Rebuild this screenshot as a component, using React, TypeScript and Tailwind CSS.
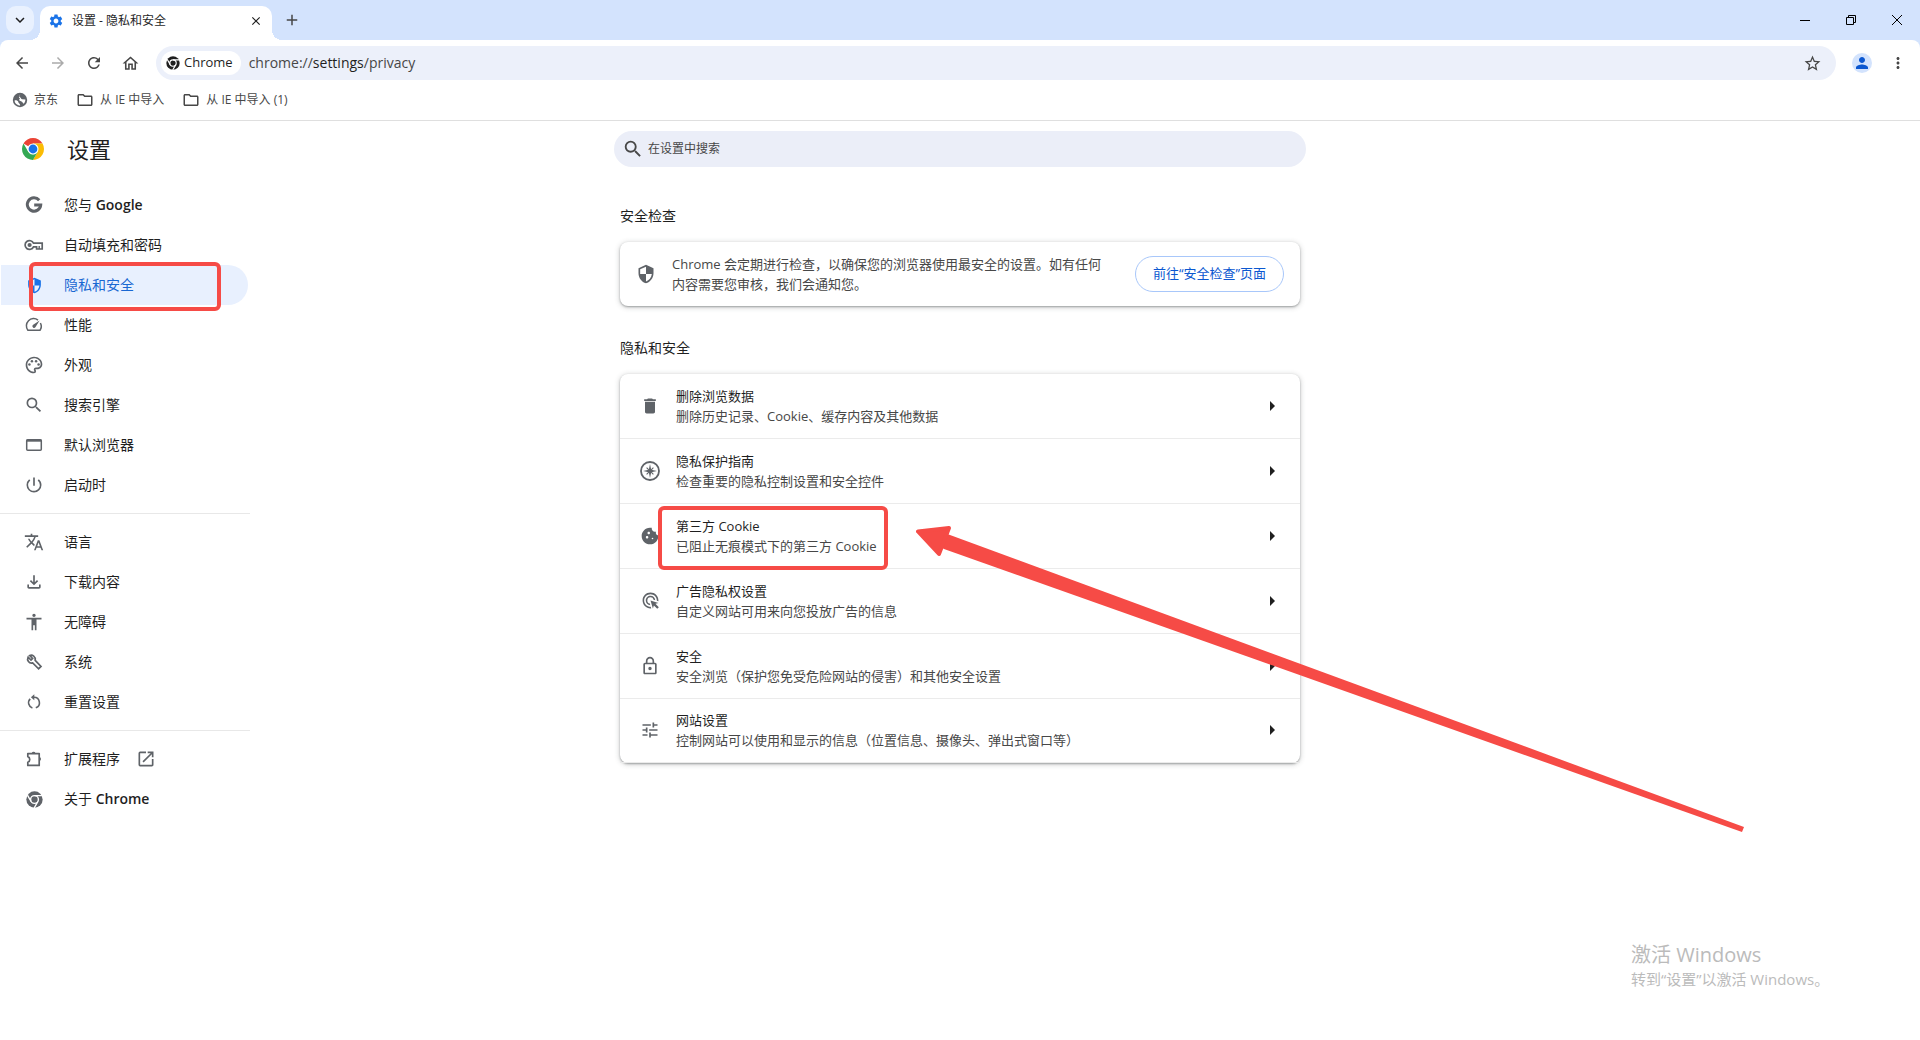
import type { ReactNode } from 'react';
import {
  MdAccessibility,
  MdAdd,
  MdAdsClick,
  MdArrowBack,
  MdArrowForward,
  MdArrowRight,
  MdClose,
  MdCookie,
  MdDelete,
  MdKeyboardArrowDown,
  MdMoreVert,
  MdOpenInNew,
  MdOutlineFileDownload,
  MdOutlineFolder,
  MdOutlineHome,
  MdOutlineLock,
  MdOutlinePalette,
  MdPerson,
  MdPowerSettingsNew,
  MdRefresh,
  MdSearch,
  MdSecurity,
  MdSettings,
  MdStarBorder,
  MdTranslate,
  MdTune,
} from 'react-icons/md';

type IconProps = { size?: number };

function GoogleIcon({ size = 20 }: IconProps) {
  return (
    <svg width={size} height={size} viewBox="0 0 20 20" fill="none" stroke="currentColor" strokeWidth="3">
      <path d="M15.2 5.2A6.7 6.7 0 1 0 16.7 10.1H10.2" />
    </svg>
  );
}

function KeyIcon({ size = 20 }: IconProps) {
  return (
    <svg width={size} height={size} viewBox="0 0 20 20" fill="none" stroke="currentColor" strokeWidth="1.7">
      <path d="M9.5 8.2A4.4 4.4 0 1 0 9.5 11.8H12.6V14H18.2V8.2Z" />
      <circle cx="5.6" cy="10" r="2.1" fill="currentColor" stroke="none" />
      <path d="M15.2 11V14" strokeWidth="1.4" />
    </svg>
  );
}

function SpeedIcon({ size = 20 }: IconProps) {
  return (
    <svg width={size} height={size} viewBox="0 0 20 20" fill="none" stroke="currentColor" strokeWidth="1.5">
      <path d="M14 5.1A7.2 7.2 0 0 0 3.9 15.2H16.1A7.2 7.2 0 0 0 16.4 8" />
      <path d="M15.6 5.4 11.4 12.2A1.7 1.7 0 1 1 8.8 10Z" fill="currentColor" stroke="none" />
    </svg>
  );
}

function WindowIcon({ size = 20 }: IconProps) {
  return (
    <svg width={size} height={size} viewBox="0 0 20 20" fill="none" stroke="currentColor" strokeWidth="1.5">
      <rect x="2.7" y="4.7" width="14.6" height="10.6" rx="1" />
      <path d="M2.5 5.6H17.5" strokeWidth="2.2" />
    </svg>
  );
}

function WrenchIcon({ size = 20 }: IconProps) {
  return (
    <svg width={size} height={size} viewBox="0 0 20 20" fill="none" stroke="currentColor" strokeWidth="1.7">
      <path d="M4.1 5.1 7 8 8.6 6.4 5.7 3.5C8.4 2.4 11.9 4.6 11.2 8.4L17 14.4 14.6 16.8 8.7 10.9C5 11.8 2.6 8.3 4.1 5.1Z" />
    </svg>
  );
}

function ResetIcon({ size = 20 }: IconProps) {
  return (
    <svg width={size} height={size} viewBox="0 0 20 20" fill="none" stroke="currentColor" strokeWidth="1.6">
      <path d="M10 5.3A5.4 5.4 0 0 1 11.8 15.8M8.4 15.9A5.4 5.4 0 0 1 6.2 6.9" />
      <path d="M10.3 2.2V8.2L6.9 5.2Z" fill="currentColor" stroke="none" />
    </svg>
  );
}

function PuzzleIcon({ size = 20 }: IconProps) {
  return (
    <svg width={size} height={size} viewBox="0 0 20 20">
      <path
        d="M3.8 4.6H15.2V16.4H3.8V13.2C6.4 12.4 6.4 8.4 3.8 7.6Z"
        fill="none"
        stroke="currentColor"
        strokeWidth="1.7"
        strokeLinejoin="round"
      />
      <path d="M7.7 4.2A2 2 0 0 1 11.5 4.2ZM15.6 8.1A2 2 0 0 1 15.6 11.9Z" fill="currentColor" />
    </svg>
  );
}

function CompassIcon({ size = 20 }: IconProps) {
  return (
    <svg width={size} height={size} viewBox="0 0 20 20" fill="none" stroke="currentColor">
      <circle cx="10" cy="10" r="9" strokeWidth="1.8" />
      <path d="M6.6 6.6l2.2 2.2M13.4 6.6l-2.2 2.2M6.6 13.4l2.2-2.2M13.4 13.4l-2.2-2.2" strokeWidth="1.1" />
      <path
        d="M10 3 11.2 8.8 17 10 11.2 11.2 10 17 8.8 11.2 3 10 8.8 8.8Z"
        fill="currentColor"
        stroke="none"
      />
    </svg>
  );
}

function GlobeIcon({ size = 16 }: IconProps) {
  return (
    <svg width={size} height={size} viewBox="0 0 16 16">
      <circle cx="8" cy="8" r="7.2" fill="#5f6368" />
      <path d="M8.6 2.6C6.8 3 6.6 4.8 8 5.2 9.2 5.6 8.8 7 10.2 7.2L13.4 7.4C13.4 9 12.8 10.6 11.6 11.8 10.6 10.8 10.2 9.2 8.4 9 6.6 8.8 7.2 6.8 8.2 6.6 6.4 6.2 6.6 3.6 8.6 2.6Z" fill="white" />
      <path d="M2.6 8.4C4.4 8.2 6.2 8.8 6.4 10.2 6.6 11.4 8 11.2 8.2 13.4 5 13.4 2.6 11 2.6 8.4Z" fill="white" />
    </svg>
  );
}

function ChromeMono({ size = 16 }: IconProps) {
  return (
    <svg width={size} height={size} viewBox="0 0 24 24" fill="none">
      <circle cx="12" cy="12" r="11.5" fill="currentColor" />
      <circle cx="12" cy="12" r="5.5" stroke="white" strokeWidth="2" />
      <path d="M12 6.5H22.5M7.2 14.8 2 5.7M16.8 14.8 11.5 24" stroke="white" strokeWidth="2" />
    </svg>
  );
}

function ChromeLogo() {
  return (
    <svg width="24" height="24" viewBox="0 0 48 48">
      <path d="M24 24 4.95 13A22 22 0 0 1 43.05 13H24Z" fill="#ea4335" />
      <path d="M24 13H43.05A22 22 0 0 1 24 46L33.5 29.5Z" fill="#fbbc04" />
      <path d="M24 46A22 22 0 0 1 4.95 13L14.5 29.5 24 35 33.5 29.5Z" fill="#34a853" />
      <circle cx="24" cy="24" r="11" fill="white" />
      <circle cx="24" cy="24" r="8.8" fill="#1a73e8" />
    </svg>
  );
}

const MENU: { label: string; latin?: string; icon: ReactNode; active?: boolean; external?: boolean }[][] = [
  [
    { label: '您与 ', latin: 'Google', icon: <GoogleIcon /> },
    { label: '自动填充和密码', icon: <KeyIcon /> },
    { label: '隐私和安全', icon: <MdSecurity size={17} />, active: true },
    { label: '性能', icon: <SpeedIcon /> },
    { label: '外观', icon: <MdOutlinePalette size={20} /> },
    { label: '搜索引擎', icon: <MdSearch size={20} /> },
    { label: '默认浏览器', icon: <WindowIcon /> },
    { label: '启动时', icon: <MdPowerSettingsNew size={20} /> },
  ],
  [
    { label: '语言', icon: <MdTranslate size={20} /> },
    { label: '下载内容', icon: <MdOutlineFileDownload size={20} /> },
    { label: '无障碍', icon: <MdAccessibility size={20} /> },
    { label: '系统', icon: <WrenchIcon /> },
    { label: '重置设置', icon: <ResetIcon /> },
  ],
  [
    { label: '扩展程序', icon: <PuzzleIcon />, external: true },
    { label: '关于 ', latin: 'Chrome', icon: <ChromeMono size={17} /> },
  ],
];

const ROWS: { title: string; sub: string; icon: ReactNode; marked?: boolean }[] = [
  { title: '删除浏览数据', sub: '删除历史记录、Cookie、缓存内容及其他数据', icon: <MdDelete size={20} /> },
  { title: '隐私保护指南', sub: '检查重要的隐私控制设置和安全控件', icon: <CompassIcon /> },
  { title: '第三方 Cookie', sub: '已阻止无痕模式下的第三方 Cookie', icon: <MdCookie size={20} />, marked: true },
  { title: '广告隐私权设置', sub: '自定义网站可用来向您投放广告的信息', icon: <MdAdsClick size={19} /> },
  { title: '安全', sub: '安全浏览（保护您免受危险网站的侵害）和其他安全设置', icon: <MdOutlineLock size={20} /> },
  { title: '网站设置', sub: '控制网站可以使用和显示的信息（位置信息、摄像头、弹出式窗口等）', icon: <MdTune size={20} /> },
];

const BOOKMARKS = ['从 IE 中导入', '从 IE 中导入 (1)'];

function TabStrip() {
  return (
    <div className="flex h-10 items-start bg-[#d3e3fd] pl-1.5">
      <button aria-label="搜索标签页" className="mt-1.5 flex size-7 items-center justify-center rounded-[10px] bg-[#e9f1fe] text-[#1f1f1f]">
        <MdKeyboardArrowDown size={18} />
      </button>
      <div className="relative ml-1.5 mt-1.5 flex h-[34px] w-[232px] items-center rounded-t-[10px] bg-white px-2 pb-1">
        <span className="absolute -left-2.5 bottom-0 size-2.5 bg-[radial-gradient(circle_at_0_0,transparent_10px,white_10px)]" />
        <span className="absolute -right-2.5 bottom-0 size-2.5 bg-[radial-gradient(circle_at_100%_0,transparent_10px,white_10px)]" />
        <MdSettings size={16} className="text-[#1a73e8]" />
        <span className="ml-2 flex-1 text-xs text-[#1f1f1f]">设置 - 隐私和安全</span>
        <button aria-label="关闭标签页" className="flex size-4 items-center justify-center text-[#1f1f1f]">
          <MdClose size={14} />
        </button>
      </div>
      <button aria-label="新标签页" className="ml-2.5 mt-2.5 flex size-5 items-center justify-center text-[#474747]">
        <MdAdd size={18} />
      </button>
      <div className="ml-auto flex h-10 items-center text-black">
        <button aria-label="最小化" className="flex w-[46px] justify-center">
          <svg width="10" height="10" viewBox="0 0 10 10" stroke="currentColor"><path d="M0 5.5H10" /></svg>
        </button>
        <button aria-label="还原" className="flex w-[46px] justify-center">
          <svg width="10" height="10" viewBox="0 0 10 10" fill="none" stroke="currentColor">
            <path d="M.5 2.5H7.5V9.5H.5ZM2.5 2.5V.5H9.5V7.5H7.5" />
          </svg>
        </button>
        <button aria-label="关闭" className="flex w-[46px] justify-center">
          <svg width="10" height="10" viewBox="0 0 10 10" stroke="currentColor"><path d="M0 0 10 10M10 0 0 10" /></svg>
        </button>
      </div>
    </div>
  );
}

function Toolbar() {
  return (
    <div className="bg-[#d3e3fd]">
      <div className="flex h-[46px] items-center rounded-t-lg bg-white pl-1 pr-[13px] text-[#474747]">
        <button aria-label="返回" className="flex w-9 justify-center"><MdArrowBack size={18} /></button>
        <button aria-label="前进" className="flex w-9 justify-center text-[#ababab]"><MdArrowForward size={18} /></button>
        <button aria-label="重新加载" className="flex w-9 justify-center"><MdRefresh size={18} /></button>
        <button aria-label="主页" className="flex w-9 justify-center"><MdOutlineHome size={19} /></button>
        <div className="ml-2 flex h-[34px] flex-1 items-center rounded-full bg-[#ecf0fa] pl-[5px] pr-3.5">
          <span className="flex h-6 items-center gap-1 rounded-full bg-white pl-[5px] pr-2 text-[#1f1f1f]">
            <ChromeMono size={14} />
            <span className="text-[13px]">Chrome</span>
          </span>
          <span className="ml-2 flex-1 text-sm text-[#474747]">
            chrome://<span className="text-[#1f1f1f]">settings</span>/privacy
          </span>
          <button aria-label="添加书签"><MdStarBorder size={19} /></button>
        </div>
        <button aria-label="个人资料" className="ml-4 flex size-5 items-center justify-center rounded-full bg-[#d3e3fd] text-[#0b57d0]">
          <MdPerson size={18} />
        </button>
        <button aria-label="更多" className="ml-[17px] flex w-[18px] justify-center"><MdMoreVert size={18} /></button>
      </div>
    </div>
  );
}

function BookmarksBar() {
  return (
    <div className="flex h-[35px] items-start gap-[18px] border-b border-[#dfdfdf] pl-3 text-[#474747]">
      <a href="#jd" className="flex h-7 items-center gap-1.5 text-xs"><GlobeIcon />京东</a>
      {BOOKMARKS.map((name) => (
        <a key={name} href="#folder" className="flex h-7 items-center gap-1.5 text-xs">
          <MdOutlineFolder size={18} />
          {name}
        </a>
      ))}
    </div>
  );
}

function Sidebar() {
  return (
    <nav className="w-[250px] pt-2">
      {MENU.map((group, g) => (
        <div key={g} className={g ? 'mt-2 border-t border-[#e8e8e8] pt-2' : ''}>
          {group.map((item) => (
            <a
              key={item.label}
              href="#settings"
              className={`relative ml-px mr-0.5 flex h-10 items-center rounded-r-full pl-[23px] text-sm ${
                item.active ? 'bg-[#e8f0fe] text-[#1967d2]' : 'text-[#1f1f1f]'
              }`}
            >
              <span className={`flex w-5 justify-center ${item.active ? 'text-[#1a73e8]' : 'text-[#5f6368]'}`}>{item.icon}</span>
              <span className="ml-5">
                {item.label}
                {item.latin && <span className="font-semibold">{item.latin}</span>}
              </span>
              {item.external && <MdOpenInNew size={20} className="ml-4 text-[#5f6368]" />}
              {item.active && <span className="absolute -top-[3px] left-7 h-[49px] w-48 rounded-md border-4 border-[#f64b46]" />}
            </a>
          ))}
        </div>
      ))}
    </nav>
  );
}

function Arrow() {
  return (
    <svg className="pointer-events-none absolute left-[296px] top-[149px]" width="832" height="316" viewBox="0 0 832 316" fill="#f64b46">
      <path d="M20 7 34 12 828 304 826 309 28 26 16 18Z" />
      <path d="M2 8.5 33 5 23 31Z" stroke="#f64b46" strokeWidth="4" strokeLinejoin="round" />
    </svg>
  );
}

const CARD = 'rounded-lg bg-white shadow-[0_1px_2px_rgba(60,64,67,0.4),0_1px_5px_1px_rgba(60,64,67,0.2)]';

export default function App() {
  return (
    <div className="relative min-h-screen overflow-hidden bg-white font-['Open_Sans','Noto_Sans_CJK_SC',sans-serif]">
      <TabStrip />
      <Toolbar />
      <BookmarksBar />

      <header className="flex h-14 items-center">
        <div className="flex-1">
          <div className="ml-[21px] flex items-center">
            <ChromeLogo />
            <h1 className="ml-[22px] text-[22px] text-[#1f1f1f]">设置</h1>
          </div>
        </div>
        <label className="flex h-9 w-[692px] items-center rounded-full bg-[#ebeef8] pl-2 text-[#474747]">
          <MdSearch size={22} />
          <input type="search" aria-label="在设置中搜索" placeholder="在设置中搜索" className="ml-1 flex-1 bg-transparent text-xs outline-none placeholder:text-[#474747]" />
        </label>
        <div className="flex-1" />
      </header>

      <div className="flex">
        <div className="flex-1"><Sidebar /></div>
        <main className="w-[680px]">
          <h2 className="mb-4 mt-[29px] text-sm leading-5 text-[#1f1f1f]">安全检查</h2>
          <section className={`${CARD} flex h-16 items-center px-4`}>
            <MdSecurity size={20} className="text-[#5f6368]" />
            <p className="ml-4 flex-1 text-[13px] leading-5 text-[#474747]">
              Chrome 会定期进行检查，以确保您的浏览器使用最安全的设置。如有任何
              <br />
              内容需要您审核，我们会通知您。
            </p>
            <button className="h-9 rounded-full border border-[#a8c7fa] px-[17px] text-[13px] text-[#0b57d0]">前往“安全检查”页面</button>
          </section>

          <h2 className="mb-4 mt-8 text-sm leading-5 text-[#1f1f1f]">隐私和安全</h2>
          <section className={`${CARD} relative divide-y divide-[#ebebeb]`}>
            {ROWS.map((row) => (
              <button key={row.title} className="relative flex h-[65px] w-full items-center pb-px pl-5 pr-4 text-left text-[13px] leading-5 last-of-type:h-16">
                <span className="flex w-5 justify-center text-[#5f6368]">{row.icon}</span>
                <span className="ml-4 flex-1">
                  <span className="block text-[#1f1f1f]">{row.title}</span>
                  <span className="block text-[#474747]">{row.sub}</span>
                </span>
                <MdArrowRight size={24} className="text-[#1f1f1f]" />
                {row.marked && <span className="absolute left-[38px] top-0.5 h-16 w-[230px] rounded-md border-4 border-[#f64b46]" />}
              </button>
            ))}
            <Arrow />
          </section>
        </main>
        <div className="flex-1" />
      </div>

      <div className="absolute bottom-[51px] right-[88px] w-[201px] text-[#bbbbbb]">
        <p className="text-xl leading-7">激活 Windows</p>
        <p className="whitespace-nowrap text-[15px] leading-5">转到“设置”以激活 Windows。</p>
      </div>
    </div>
  );
}
